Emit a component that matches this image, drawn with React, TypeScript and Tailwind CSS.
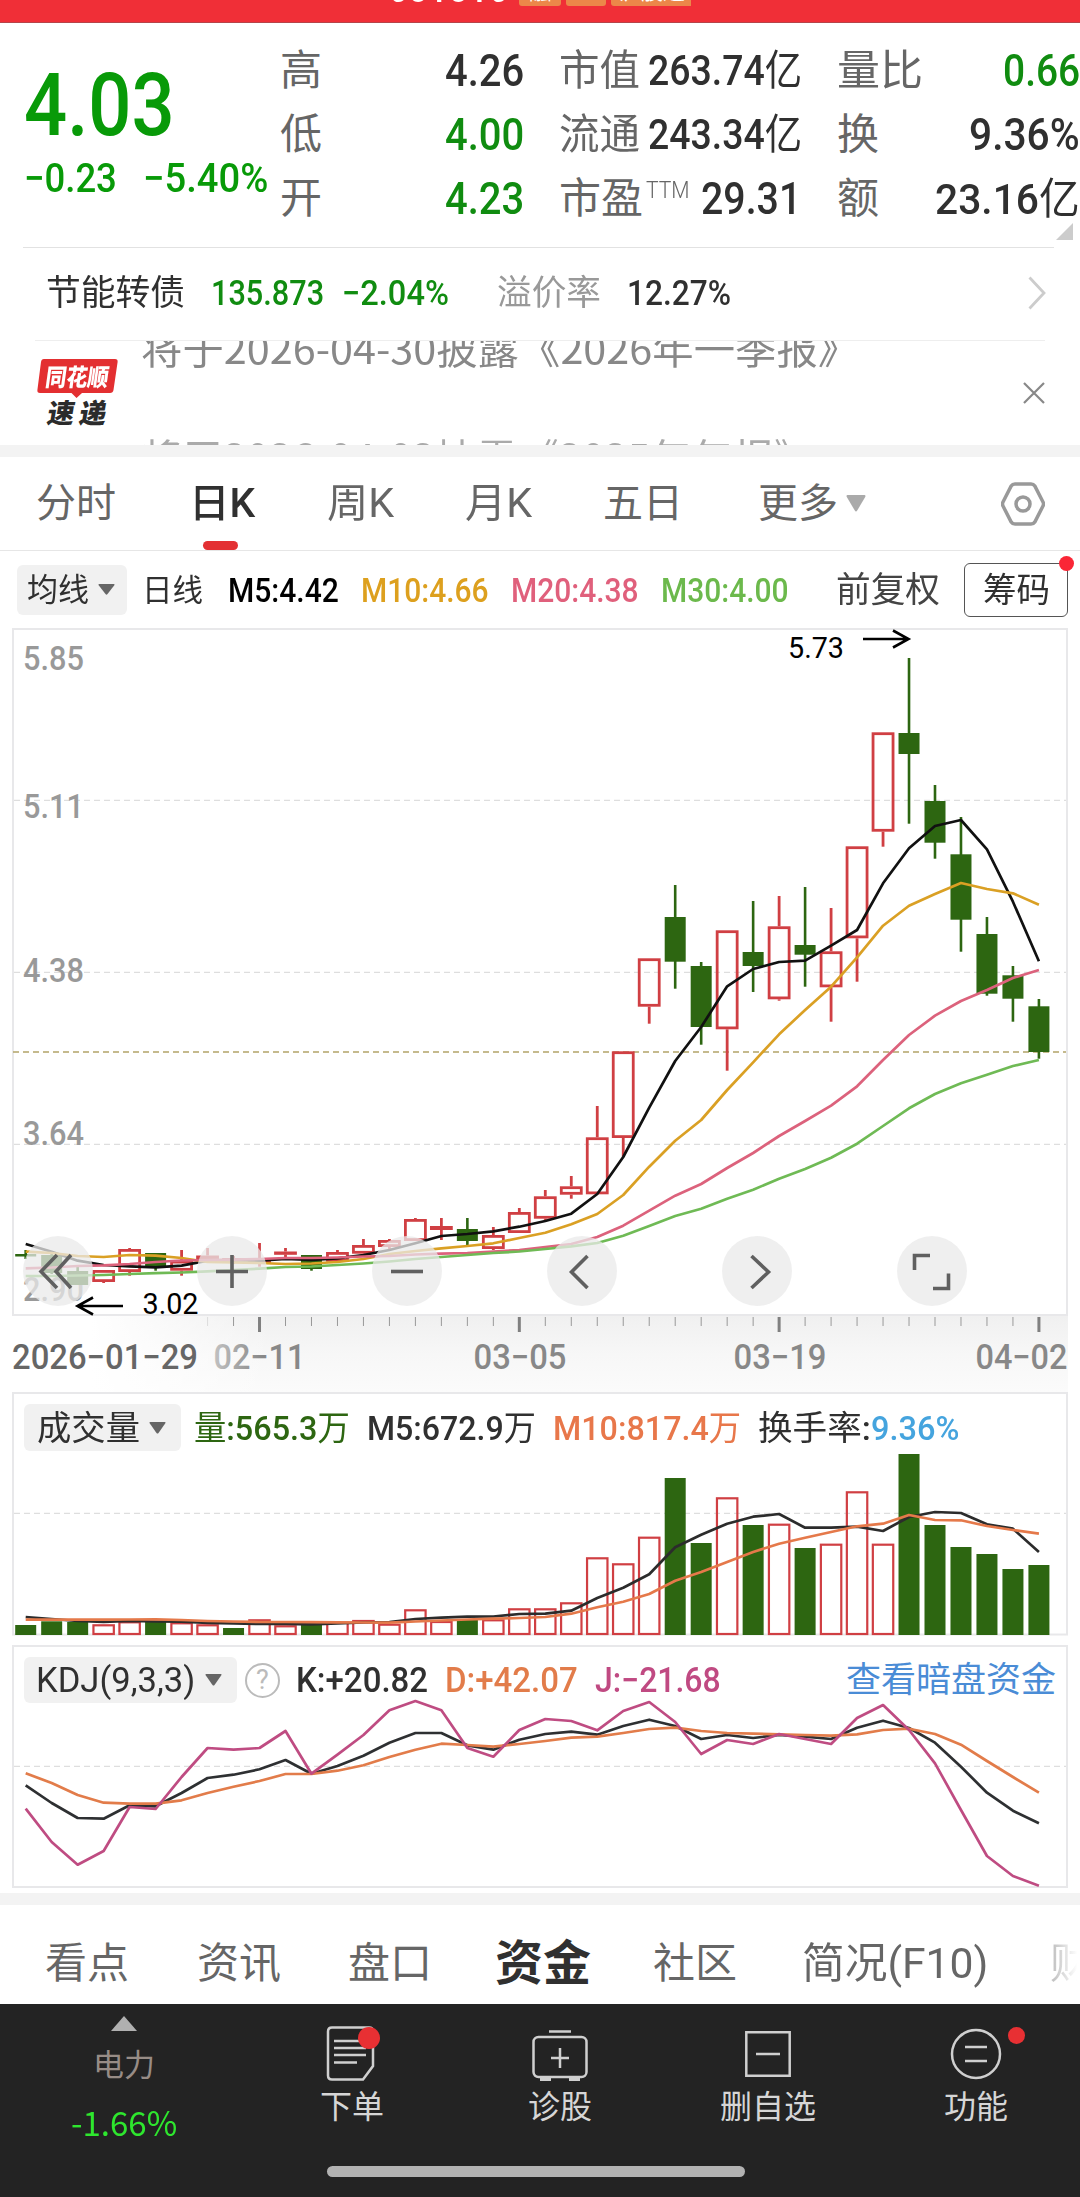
import { useLayoutEffect, useRef, useState } from "react";
import type { ReactNode } from "react";

const FONT = "font-['Roboto','Noto_Sans_CJK_SC',sans-serif]";
const CJK = "font-['Noto_Sans_CJK_SC',sans-serif]";

/* Text squeezed or stretched horizontally to fill the width of its box. */
function Fit({ className = "", children }: { className?: string; children: ReactNode }) {
  const box = useRef<HTMLSpanElement>(null);
  const inner = useRef<HTMLSpanElement>(null);
  const [scale, setScale] = useState(1);
  useLayoutEffect(() => {
    if (box.current && inner.current) setScale(box.current.clientWidth / inner.current.offsetWidth);
  }, []);
  return (
    <span ref={box} className={`block shrink-0 whitespace-nowrap leading-none ${className}`}>
      <span ref={inner} className="inline-block origin-left" style={{ transform: `scaleX(${scale})` }}>
        {children}
      </span>
    </span>
  );
}

const Caret = ({ className }: { className: string }) => (
  <svg viewBox="0 0 20 14" className={`shrink-0 ${className}`} preserveAspectRatio="none">
    <path d="M1.5 0h17q1.5.3.7 1.6L11.200 12.800q-1.200 1.500-2.400 0L.800 1.600Q0 .3 1.500 0z" fill="currentColor" />
  </svg>
);

const X0 = 25.7;
const STEP = 25.98;
const cx = (i: number) => X0 + i * STEP;
const GREEN = "#2d6611";
const RED = "#d03f43";

// [rising, body top, body bottom, wick top, wick bottom]
const candles: [number, number, number, number, number][] = [
  [0, 1254, 1256.5, 1250, 1259], [0, 1255, 1273, 1253, 1274], [0, 1271, 1285, 1267, 1285], [1, 1270, 1282, 1270, 1283],
  [1, 1249, 1272, 1248, 1275.7], [0, 1253, 1268, 1253, 1270.7], [1, 1260.7, 1270.7, 1250, 1275.7], [1, 1255.5, 1259, 1248, 1261],
  [1, 1258, 1261, 1256, 1264], [1, 1260, 1263, 1243, 1266.7], [1, 1251.5, 1254.5, 1248, 1260], [0, 1255, 1269, 1255, 1270.7],
  [1, 1252, 1261.7, 1250, 1262], [1, 1245, 1253.7, 1239, 1254], [1, 1240, 1247, 1239, 1251], [1, 1219, 1241, 1218, 1241],
  [1, 1226, 1230, 1218, 1240], [0, 1229, 1241, 1218, 1245], [1, 1235, 1249, 1227, 1250], [1, 1212, 1233, 1208, 1233],
  [1, 1196.3, 1218.7, 1190, 1221], [1, 1186.3, 1194.7, 1176, 1198.7], [1, 1137.3, 1194.3, 1106, 1194.3], [1, 1051.3, 1138, 1051.3, 1156.7],
  [1, 958.3, 1006.7, 958.3, 1023.7], [0, 917, 961.7, 885, 988.7], [0, 966, 1027, 962, 1044.7], [1, 930.3, 1029.3, 930.3, 1070.7],
  [0, 952, 966, 901, 992], [1, 926.3, 999.3, 896, 1000.7], [0, 945, 954.7, 887, 986.7], [1, 951.3, 987.3, 908, 1021.7],
  [1, 846.3, 938.3, 846.3, 981.7], [1, 732.3, 831.7, 732.3, 846.7], [0, 733, 754, 658, 823.7], [0, 801, 842.7, 785, 858.7],
  [0, 854.3, 919.7, 817, 951.7], [0, 934, 993.7, 917, 995.7], [0, 975.3, 998.7, 966, 1021.7], [0, 1006.3, 1052, 999, 1058.7],
];

const ma5 = [1244, 1251.7, 1260.7, 1265, 1266.3, 1267.3, 1265.7, 1260.7, 1260, 1260.7, 1259, 1260, 1258.3, 1255, 1250, 1243.3, 1236, 1234, 1231.3, 1226.7, 1221, 1213.7, 1194, 1157, 1107.7, 1061, 1027, 986.3, 969, 962, 960.7, 945.7, 930, 883.3, 848.3, 826, 820, 849.3, 901.7, 961.3];
const ma10 = [1251.7, 1253, 1256, 1257, 1255, 1255.7, 1258, 1262, 1262.5, 1263, 1264, 1263.5, 1262, 1259, 1254, 1251, 1248.3, 1246, 1243.3, 1238, 1232.7, 1224.3, 1214, 1195, 1166.7, 1140.7, 1120, 1090, 1062.3, 1034.3, 1010, 986.7, 957.3, 925.7, 905.7, 894, 883, 889, 893.3, 904.7];
const ma20 = [1268.3, 1267.5, 1266, 1265.3, 1264, 1262, 1260.5, 1260, 1259.7, 1259, 1258, 1258, 1257.5, 1256.5, 1256, 1254.5, 1253.7, 1253, 1251.5, 1250, 1247, 1244, 1237, 1225.7, 1210.7, 1195.7, 1184, 1168, 1153, 1136, 1121, 1105.7, 1086.3, 1060, 1035, 1015.7, 1001, 990, 978, 970];
const ma30 = [1276, 1276, 1275.5, 1275, 1274, 1273.2, 1272.5, 1271.3, 1270, 1268.7, 1267, 1266.5, 1265, 1263.5, 1261.5, 1259, 1257, 1255, 1253, 1251.5, 1249, 1246.3, 1243, 1235.7, 1226, 1216, 1208.7, 1198.7, 1189.7, 1178.7, 1169, 1157.7, 1143.7, 1126, 1108.3, 1094, 1083.3, 1074.7, 1066, 1060];

// [rising, bar top]
const volumes: [number, number][] = [
  [0, 1625], [0, 1621.3], [0, 1622], [1, 1624.3], [1, 1621.3], [0, 1621.7], [1, 1622.3], [1, 1624.3], [0, 1628], [1, 1619.3],
  [1, 1625.3], [0, 1624.3], [1, 1621.7], [1, 1620], [1, 1623.7], [1, 1609.3], [1, 1621], [0, 1620], [1, 1619.3], [1, 1608.3],
  [1, 1608.3], [1, 1602.3], [1, 1557.3], [1, 1563.3], [1, 1536.7], [0, 1478], [0, 1543], [1, 1497.3], [0, 1525], [1, 1523.7],
  [0, 1548], [1, 1543.7], [1, 1491.3], [1, 1543.7], [0, 1454], [0, 1525], [0, 1547], [0, 1554], [0, 1569], [0, 1565],
];
const vol5 = [1617, 1619, 1621, 1622, 1621, 1621.5, 1621.7, 1623, 1623.5, 1624, 1624, 1624.3, 1623.5, 1622.5, 1622, 1619, 1617.7, 1616.7, 1616.5, 1614, 1613.7, 1610.7, 1598, 1587.7, 1574.3, 1547.3, 1534.7, 1523.7, 1516.7, 1514, 1527.7, 1527.7, 1526.7, 1531, 1517, 1512, 1513, 1524.3, 1528.7, 1552];
const vol10 = [1619.7, 1619.7, 1619.7, 1619.7, 1619.5, 1619.3, 1620, 1621, 1621.5, 1622, 1622, 1622.2, 1622.3, 1622.5, 1622.7, 1621.5, 1620.5, 1619.5, 1618.7, 1618, 1617, 1613.7, 1607.3, 1601.7, 1594, 1580.7, 1572, 1562, 1552, 1543.7, 1537.7, 1532, 1526.3, 1523.7, 1515, 1520, 1520.3, 1526, 1530, 1533.7];

const kLine = [1785.3, 1803, 1818, 1818.7, 1805.3, 1806.3, 1793, 1778, 1774.7, 1769.3, 1760, 1773.7, 1766, 1755.7, 1742.7, 1733, 1733, 1745.3, 1749.7, 1739.7, 1734, 1731.7, 1734.7, 1726, 1719.7, 1726, 1739, 1735, 1738, 1735, 1736.7, 1739, 1727.7, 1720.7, 1728, 1742.7, 1766.7, 1792.7, 1810.7, 1823.3];
const dLine = [1773.3, 1783, 1795, 1802.7, 1803.7, 1803.7, 1800.3, 1793, 1786.7, 1781, 1774, 1774, 1770.7, 1765.3, 1757, 1749.7, 1743.7, 1745, 1746.7, 1744, 1741, 1737.7, 1736.7, 1733, 1729, 1727.7, 1731, 1733, 1733.7, 1734.3, 1735, 1735.7, 1734.3, 1730, 1728.7, 1734, 1744.7, 1761, 1777, 1792.7];
const jLine = [1808.7, 1842, 1864.7, 1851, 1807, 1809, 1777, 1748, 1749.7, 1748, 1731, 1773.7, 1754.7, 1735, 1710.3, 1701, 1710.3, 1748, 1756.7, 1730, 1719, 1721, 1730.3, 1711, 1702, 1722, 1754, 1740, 1744, 1734, 1739, 1744, 1718, 1705, 1730, 1763.3, 1810, 1856, 1876, 1885.7];

function Line({ data, color }: { data: number[]; color: string }) {
  return <polyline points={data.map((y, i) => `${cx(i)},${y}`).join(" ")} fill="none" stroke={color} strokeWidth="2.7" strokeLinejoin="round" />;
}

function Grid({ y, color = "#dedede" }: { y: number; color?: string }) {
  return <line x1="14" x2="1066" y1={y} y2={y} stroke={color} strokeWidth="1.3" strokeDasharray="6 4" />;
}

function SvgText({ x, y, w, size, fill, weight = 500, children }: { x: number; y: number; w: number; size: number; fill: string; weight?: number; children: string }) {
  return (
    <text x={x} y={y} textLength={w} lengthAdjust="spacingAndGlyphs" fontSize={size} fill={fill} fontWeight={weight} className={FONT}>
      {children}
    </text>
  );
}

function PriceChart() {
  return (
    <svg viewBox="0 628 1080 688" className="block h-[688px] w-[1080px]">
      <rect x="13" y="629" width="1054" height="686" fill="none" stroke="#e8e8ea" strokeWidth="2" />
      <Grid y={800.3} />
      <Grid y={972.300} />
      <Grid y={1144.300} />
      {[["5.85", 670], ["5.11", 818], ["4.38", 981.500], ["3.64", 1144.500], ["2.90", 1301]].map(([t, y]) => (
        <SvgText key={t} x={23} y={y as number} w={61} size={34} fill="#999">{t as string}</SvgText>
      ))}
      <line x1="13" x2="1066" y1="1052" y2="1052" stroke="#b3a468" strokeWidth="1.700" strokeDasharray="6 4" />
      {candles.map(([up, t, b, wt, wb], i) => {
        const x = cx(i);
        return up ? (
          <g key={i} stroke={RED} strokeWidth="2.800" fill="none">
            {wt < t && <line x1={x} x2={x} y1={wt} y2={t} />}
            {wb > b && <line x1={x} x2={x} y1={b} y2={wb} />}
            <rect x={x - 10} y={t + 1.400} width="20" height={Math.max(b - t - 2.800, 0.500)} />
          </g>
        ) : (
          <g key={i} fill={GREEN}>
            <rect x={x - 1.300} y={wt} width="2.600" height={wb - wt} />
            <rect x={x - 10.500} y={t} width="21" height={b - t} />
          </g>
        );
      })}
      <Line data={ma5} color="#111" />
      <Line data={ma10} color="#daa024" />
      <Line data={ma20} color="#dc627c" />
      <Line data={ma30} color="#6fba55" />
      <SvgText x={788} y={658} w={56} size={29} fill="#000" weight={400}>5.73</SvgText>
      <path d="M863 639H908M893 630.500 908.500 639 893 647.500" fill="none" stroke="#000" strokeWidth="2.600" />
      <SvgText x={142.500} y={1314} w={56} size={29} fill="#000" weight={400}>3.02</SvgText>
      <path d="M123 1306H78M93 1297.500 77.500 1306 93 1314.500" fill="none" stroke="#000" strokeWidth="2.600" />
    </svg>
  );
}

const controls = [
  { left: "left-[23px]", d: "M34 19 18 35.500 34 52M48 19 33 35.500 48 52" },
  { left: "left-[197px]", d: "M19 35.500H51M35 19V52" },
  { left: "left-[372px]", d: "M19 35.500H51" },
  { left: "left-[547px]", d: "M40.500 20 24.500 36 40.500 52" },
  { left: "left-[722px]", d: "M29.500 20 46.500 36 29.500 52" },
  { left: "left-[897px]", d: "M17.500 34V19.500H33M51.500 37.500V52.500H36" },
];

function Axis() {
  return (
    <div className="relative h-[76px]">
      <div className="absolute inset-y-0 left-[13px] right-[12px] bg-linear-to-b from-[#f0f0f0] via-[#f7f7f7] to-[#fbfbfb]" />
      <div className="absolute inset-y-0 left-[13px] w-[260px] bg-linear-to-r from-white from-30% to-white/0" />
      <svg viewBox="0 1316 1080 76" className="relative block h-[76px] w-[1080px]">
        <defs>
          <linearGradient id="fade" gradientUnits="userSpaceOnUse" x1="205" x2="262" y1="0" y2="0">
            <stop offset="0" stopColor="#ccc" />
            <stop offset="1" stopColor="#888" />
          </linearGradient>
        </defs>
        {Array.from({ length: 33 }, (_, k) => k + 7).map((i) =>
          i % 10 === 9 ? (
            <rect key={i} x={cx(i) - 1.500} y="1317" width="3" height="15" fill="#808080" />
          ) : (
            <rect key={i} x={cx(i) - 0.500} y="1317" width="1" height="9" fill={i < 8 ? "#ddd" : "#999"} />
          ),
        )}
        <SvgText x={12} y={1369} w={186} size={34.500} fill="#666">2026−01−29</SvgText>
        <SvgText x={213.500} y={1369} w={92} size={34.500} fill="url(#fade)">02−11</SvgText>
        <SvgText x={473.500} y={1369} w={93} size={34.500} fill="#888">03−05</SvgText>
        <SvgText x={733.500} y={1369} w={93} size={34.500} fill="#888">03−19</SvgText>
        <SvgText x={975.500} y={1369} w={92} size={34.500} fill="#888">04−02</SvgText>
      </svg>
    </div>
  );
}

function VolumeChart() {
  return (
    <svg viewBox="0 1392 1080 244" className="absolute inset-0 block h-[244px] w-[1080px]">
      <rect x="13" y="1393" width="1054" height="241.500" fill="none" stroke="#e8e8ea" strokeWidth="2" />
      <Grid y={1513.300} />
      {volumes.map(([up, t], i) =>
        up ? (
          <rect key={i} x={cx(i) - 10.200} y={t + 1} width="20.400" height={1635 - t - 2} fill="none" stroke={RED} strokeWidth="2.200" />
        ) : (
          <rect key={i} x={cx(i) - 10.500} y={t} width="21" height={1635 - t} fill={GREEN} />
        ),
      )}
      <Line data={vol5} color="#2c2c2c" />
      <Line data={vol10} color="#e5794a" />
    </svg>
  );
}

function KdjChart() {
  return (
    <svg viewBox="0 1645 1080 243" className="absolute inset-0 block h-[243px] w-[1080px]">
      <rect x="13" y="1646" width="1054" height="241" fill="none" stroke="#e8e8ea" strokeWidth="2" />
      <Grid y={1766.300} />
      <Line data={kLine} color="#2e3032" />
      <Line data={dLine} color="#e27c4a" />
      <Line data={jLine} color="#bf4c82" />
    </svg>
  );
}

function Quote() {
  return (
    <header className="flex h-[224px] shrink-0 pt-[16px]">
      <div className="w-[280px] pl-[24px] text-[#089a08]">
        <Fit className="mt-[22px] w-[151px] text-[88px] font-medium">4.03</Fit>
        <div className="mt-[10px] flex gap-[26px] text-[40px] font-medium">
          <Fit className="w-[93px]">−0.23</Fit>
          <Fit className="w-[125px]">−5.40%</Fit>
        </div>
      </div>
      <div className="grid h-[192px] w-[244px] grid-rows-3 items-center text-[42px]">
        {[["高", "4.26", "text-[#303030]"], ["低", "4.00", "text-[#108c10]"], ["开", "4.23", "text-[#108c10]"]].map(([l, v, c]) => (
          <div key={l} className="flex items-center justify-between">
            <span className="leading-none text-[#666]">{l}</span>
            <Fit className={`w-[79px] text-[44px] font-medium ${c}`}>{v}</Fit>
          </div>
        ))}
      </div>
      <div className="ml-[35px] grid h-[192px] w-[243px] grid-rows-3 items-center text-[42px]">
        <div className="flex items-center justify-between">
          <Fit className="w-[81px] text-[#666]">市值</Fit>
          <Fit className="w-[154px] font-medium text-[#303030]">263.74<span className="font-normal">亿</span></Fit>
        </div>
        <div className="flex items-center justify-between">
          <Fit className="w-[81px] text-[#666]">流通</Fit>
          <Fit className="w-[154px] font-medium text-[#303030]">243.34<span className="font-normal">亿</span></Fit>
        </div>
        <div className="flex items-center">
          <Fit className="w-[84px] text-[#666]">市盈</Fit>
          <Fit className="mb-[18px] ml-[3px] w-[44px] text-[23px] font-light text-[#666]">TTM</Fit>
          <Fit className="ml-[11px] w-[100px] text-[44px] font-medium text-[#303030]">29.31</Fit>
        </div>
      </div>
      <div className="relative ml-[35px] h-[192px] w-[243px]">
        <div className="grid h-[192px] grid-rows-3 items-center text-[42px]">
          <div className="flex items-center justify-between">
            <Fit className="w-[86px] text-[#666]">量比</Fit>
            <Fit className="w-[77px] text-[44px] font-medium text-[#108c10]">0.66</Fit>
          </div>
          <div className="flex items-center justify-between">
            <span className="leading-none text-[#666]">换</span>
            <Fit className="w-[111px] text-[44px] font-medium text-[#303030]">9.36%</Fit>
          </div>
          <div className="flex items-center justify-between">
            <span className="leading-none text-[#666]">额</span>
            <Fit className="w-[145px] text-[43px] font-medium text-[#303030]">23.16<span className="font-normal">亿</span></Fit>
          </div>
        </div>
        <svg viewBox="0 0 17 17" className="absolute left-[219px] top-[184px] size-[17px]"><path d="M17 0V17H0z" fill="#ccc" /></svg>
      </div>
    </header>
  );
}

function News() {
  return (
    <div className="flex h-[104px] shrink-0 overflow-hidden">
      <div className="ml-[36px] mt-[18px] flex w-[82px] flex-col items-center">
        <div className="relative h-[34px] w-[81px]">
          <svg viewBox="0 0 81 40" className="absolute left-0 top-0 h-[40px] w-[81px]">
            <path d="M7 0H78q3 0 2.600 3L76.500 31q-.5 3-3.500 3H45l-5.500 5L34.500 34H3Q0 34 .4 31L4 3Q4.400 0 7 0z" fill="#e32f31" />
          </svg>
          <Fit className={`absolute left-[9px] top-[5px] w-[63px] -skew-x-8 text-[24px] font-black text-white ${CJK}`}>同花顺</Fit>
        </div>
        <span className={`mt-[5px] flex -skew-x-10 gap-[5px] text-[27px] font-black leading-none text-[#2b2b2b] ${CJK}`}><span>速</span><span>递</span></span>
      </div>
      <div className={`ml-[23px] w-[860px] whitespace-nowrap text-[40px] ${CJK}`}>
        <div className="-mt-[48px] h-[109px] pt-[34px] text-[#888]"><Fit className="w-[718px]">将于2026-04-30披露《2026年一季报》</Fit></div>
        <div className="h-[109px] pt-[34px] text-[#aaa]"><Fit className="w-[674px]">将于2026-04-02披露《2025年年报》</Fit></div>
      </div>
      <svg viewBox="0 0 22 22" className="ml-[22px] mt-[41px] size-[22px]"><path d="M1 1 21 21M21 1 1 21" stroke="#888" strokeWidth="2.200" /></svg>
    </div>
  );
}

function PeriodTabs() {
  return (
    <nav className="relative flex h-[94px] shrink-0 items-center border-b border-[#e6e6e6] text-[40px] leading-none text-[#666]">
      <span className="ml-[36px] w-[153px]">分时</span>
      <span className="w-[138px] font-medium text-[#303030]"><Fit className="w-[66px]">日K</Fit></span>
      <span className="w-[138px]"><Fit className="w-[67px]">周K</Fit></span>
      <span className="w-[138px]"><Fit className="w-[67px]">月K</Fit></span>
      <span className="w-[155px]">五日</span>
      <span>更多</span>
      <Caret className="ml-[8px] h-[17px] w-[20px] text-[#aaa]" />
      <svg viewBox="0 0 44 44" className="ml-[135px] size-[44px]" fill="none" stroke="#999" strokeWidth="3.500">
        <path d="M14 2H30q2.500 0 3.800 2L42 20q1 2 0 4L33.800 40q-1.300 2-3.800 2H14q-2.500 0-3.800-2L2 24q-1-2 0-4L10.200 4Q11.500 2 14 2z" />
        <circle cx="22" cy="22" r="7" />
      </svg>
      <span className="absolute bottom-0 left-[203px] h-[9px] w-[35px] rounded-full bg-[#e33033]" />
    </nav>
  );
}

function Averages() {
  return (
    <div className="flex h-[77px] shrink-0 items-center pl-[17px] text-[33px] font-medium">
      <button className="flex h-[50px] w-[110px] items-center rounded-[6px] bg-[#f1f1f1] pl-[10px] font-normal leading-none text-[#303030]">
        <Fit className="w-[62px] text-[32px]">均线</Fit>
        <Caret className="ml-[9px] h-[11px] w-[17px] text-[#666]" />
      </button>
      <Fit className="ml-[15px] w-[61px] pt-[2px] text-[31px] font-normal text-[#303030]">日线</Fit>
      <Fit className="ml-[25px] w-[111px] pt-[2px] text-black">M5:4.42</Fit>
      <Fit className="ml-[22px] w-[128px] pt-[2px] text-[#dda01e]">M10:4.66</Fit>
      <Fit className="ml-[22px] w-[128px] pt-[2px] text-[#e0607c]">M20:4.38</Fit>
      <Fit className="ml-[22px] w-[128px] pt-[2px] text-[#6cb94c]">M30:4.00</Fit>
      <Fit className="ml-[47px] w-[104px] pt-px text-[35px] font-normal text-[#444]">前复权</Fit>
      <button className="relative ml-[24px] flex h-[54px] w-[104px] items-center justify-center rounded-[6px] border border-[#555] text-[34px] font-normal leading-none text-[#303030]">
        <Fit className="w-[67px]">筹码</Fit>
        <span className="absolute -right-[7px] -top-[8px] size-[15px] rounded-full bg-[#fa2636]" />
      </button>
    </div>
  );
}

const navLabel = "absolute top-[87px] w-full text-center text-[32px] leading-none text-[#d6d6d6]";

function BottomNav() {
  return (
    <footer className="relative flex h-[193px] shrink-0 bg-[#232323]">
      <div className="flex w-[248px] flex-col items-center">
        <svg viewBox="0 0 26 15" className="mt-[12px] h-[15px] w-[26px]"><path d="M13 0 26 15H0z" fill="#b0b0b0" /></svg>
        <span className="mt-[19px] text-[31px] leading-none text-[#978c86]">电力</span>
        <Fit className={`mt-[24px] w-[106px] text-[34px] text-[#2ee62e] ${CJK}`}>-1.66%</Fit>
      </div>
      <div className="relative w-[208px]">
        <svg viewBox="0 0 60 60" className="absolute left-[78px] top-[20px] size-[60px]" fill="none" stroke="#cfcfcf" strokeWidth="2.500">
          <path d="M6 3.500H43q4 0 4 4V42L37 55.500H6q-4 0-4-4V7.500Q2 3.500 6 3.500zM8 17H37M8 24H40M8 31H40M8 38.500H31" />
          <circle cx="43" cy="14" r="11" fill="#e83033" stroke="none" />
        </svg>
        <span className={navLabel}>下单</span>
      </div>
      <div className="relative w-[208px]">
        <svg viewBox="0 0 56 56" className="absolute left-[76px] top-[24px] size-[56px]" fill="none" stroke="#cfcfcf" strokeWidth="2.500">
          <rect x="1.500" y="9" width="53" height="40" rx="5" />
          <path d="M17 3.500H39M28 20V40M19 30H37" />
          <path d="M8 51.500H19M37 51.500H48" strokeWidth="3" />
        </svg>
        <span className={navLabel}>诊股</span>
      </div>
      <div className="relative w-[208px]">
        <svg viewBox="0 0 46 46" className="absolute left-[81px] top-[27px] size-[46px]" fill="none" stroke="#cfcfcf" strokeWidth="2.500">
          <path d="M1.300 1.300H44.700V44.700H1.300zM11 23H35" />
        </svg>
        <span className={navLabel}>删自选</span>
      </div>
      <div className="relative w-[208px]">
        <svg viewBox="0 0 80 56" className="absolute left-[76px] top-[22px] h-[56px] w-[80px]" fill="none" stroke="#cfcfcf" strokeWidth="2.500">
          <circle cx="28" cy="28" r="24" />
          <path d="M17 21H39M17 35H39" />
          <circle cx="68.500" cy="9.500" r="8.500" fill="#e83033" stroke="none" />
        </svg>
        <span className={navLabel}>功能</span>
      </div>
      <span className="absolute left-[327px] top-[162px] h-[11px] w-[418px] rounded-full bg-[#b2b2b2]" />
    </footer>
  );
}

export default function App() {
  return (
    <div className={`flex h-[2197px] w-[1080px] flex-col overflow-hidden bg-white ${FONT}`}>
      <div className="flex h-[23px] shrink-0 items-start overflow-hidden border-b border-[#b5454a] bg-[#f02f37] pl-[388px] text-white">
        <Fit className="-mt-[31px] w-[120px] text-[40px] font-medium">601016</Fit>
        <div className="-mt-[22px] ml-[11px] flex gap-[5px] text-[22px] leading-[28px]">
          <span className="h-[28px] w-[42px] rounded-[3px] bg-[#ec8749] text-center">融</span>
          <span className="h-[28px] w-[40px] rounded-[3px] bg-[#ec8749] text-center">L1</span>
          <span className="h-[28px] w-[80px] overflow-hidden whitespace-nowrap rounded-l-[3px] bg-[#ec8749] pl-[8px]">沪股通</span>
        </div>
      </div>
      <Quote />
      <div className="ml-[23px] flex h-[93px] w-[1031px] shrink-0 items-center border-t border-[#e2e2e2] pb-[2px] text-[35px] font-medium">
        <Fit className="ml-[23px] w-[139px] font-normal text-[#303030]">节能转债</Fit>
        <Fit className="ml-[26px] w-[113px] text-[#108c10]">135.873</Fit>
        <Fit className="ml-[18px] w-[107px] text-[#108c10]">−2.04%</Fit>
        <Fit className="ml-[48px] w-[104px] font-normal text-[#999]">溢价率</Fit>
        <Fit className="ml-[26px] w-[104px] text-[#303030]">12.27%</Fit>
        <svg viewBox="0 0 18 34" className="ml-[297px] h-[34px] w-[18px]" fill="none" stroke="#ccc" strokeWidth="2.800"><path d="M1.500 1.500 16 17 1.500 32.500" /></svg>
      </div>
      <div className="ml-[35px] h-px w-[1010px] shrink-0 bg-[#eee]" />
      <News />
      <div className="h-[12px] shrink-0 bg-[#f3f3f3]" />
      <PeriodTabs />
      <Averages />
      <div className="relative h-[688px] shrink-0">
        <PriceChart />
        {controls.map((c) => (
          <button key={c.left} className={`absolute top-[608px] size-[70px] rounded-full bg-[#e9e9e9]/75 ${c.left}`}>
            <svg viewBox="0 0 70 70" className="size-[70px]" fill="none" stroke="#606060" strokeWidth="3.600"><path d={c.d} /></svg>
          </button>
        ))}
      </div>
      <div className="shrink-0"><Axis /></div>
      <div className="relative h-[253px] shrink-0 pt-[12px]">
        <VolumeChart />
        <div className="relative flex h-[47px] items-center pl-[24px] text-[34px] font-medium">
          <button className="flex h-[47px] w-[157px] items-center rounded-[6px] bg-[#f1f1f1] pl-[12px] font-normal text-[#303030]">
            <Fit className="w-[103px]">成交量</Fit>
            <Caret className="ml-[10px] h-[12px] w-[17px] text-[#666]" />
          </button>
          <Fit className="ml-[13px] w-[156px] text-[#2d6611]"><span className="font-normal">量</span>:565.3<span className="font-normal">万</span></Fit>
          <Fit className="ml-[17px] w-[169px] text-[#303030]">M5:672.9<span className="font-normal">万</span></Fit>
          <Fit className="ml-[17px] w-[188px] text-[#e8774a]">M10:817.4<span className="font-normal">万</span></Fit>
          <Fit className="ml-[17px] w-[113px] text-[#303030]"><span className="font-normal">换手率</span>:</Fit>
          <Fit className="w-[88px] text-[#45a4de]">9.36%</Fit>
        </div>
      </div>
      <div className="relative h-[248px] shrink-0 pt-[12px]">
        <KdjChart />
        <div className="relative flex h-[46px] items-center pl-[24px] text-[35px] font-medium">
          <button className="flex h-[46px] w-[213px] items-center rounded-[6px] bg-[#f1f1f1] pl-[12px] font-normal text-[#303030]">
            <Fit className="w-[159px]">KDJ(9,3,3)</Fit>
            <Caret className="ml-[10px] h-[12px] w-[17px] text-[#666]" />
          </button>
          <span className="ml-[8px] flex size-[35px] items-center justify-center rounded-full border-2 border-[#bbb] text-[27px] font-normal leading-none text-[#bbb]">?</span>
          <Fit className="ml-[16px] w-[132px] pt-px text-[#303030]">K:+20.82</Fit>
          <Fit className="ml-[17px] w-[133px] pt-px text-[#e27c4a]">D:+42.07</Fit>
          <Fit className="ml-[17px] w-[126px] pt-px text-[#c04a82]">J:−21.68</Fit>
          <Fit className="ml-[125px] w-[210px] pt-px font-normal text-[#4a8cd6]">查看暗盘资金</Fit>
        </div>
      </div>
      <div className="h-[12px] shrink-0 bg-[#f3f3f3]" />
      <nav className="flex h-[99px] shrink-0 items-center overflow-hidden whitespace-nowrap pt-[18px] text-[42px] leading-none text-[#666]">
        <span className="ml-[45px] w-[152px] shrink-0">看点</span>
        <span className="w-[151px] shrink-0">资讯</span>
        <span className="w-[147px] shrink-0">盘口</span>
        <span className="w-[158px] shrink-0 text-[48px] font-bold text-[#303030]">资金</span>
        <span className="w-[149px] shrink-0">社区</span>
        <Fit className="w-[186px]">简况(F10)</Fit>
        <span className="ml-[62px] shrink-0 bg-linear-to-r from-[#bbb] to-white to-65% bg-clip-text text-transparent">财</span>
      </nav>
      <BottomNav />
    </div>
  );
}
